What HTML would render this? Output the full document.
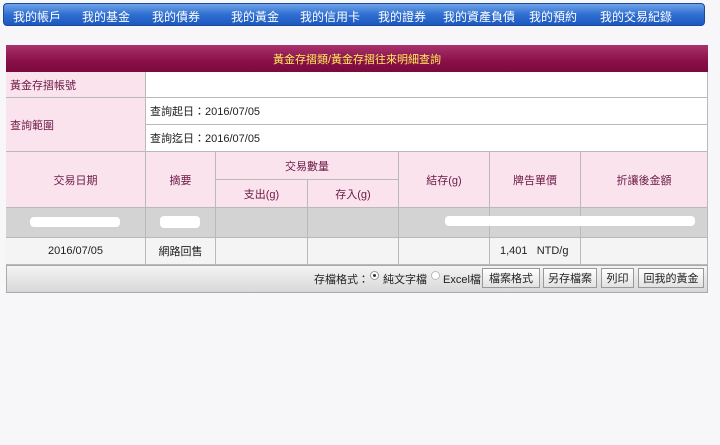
<!DOCTYPE html>
<html><head><meta charset="utf-8"><style>
body{margin:0;width:720px;height:445px;background:#f7f7f9;font-family:"Liberation Sans","Noto Sans CJK TC",sans-serif;font-size:11px;position:relative;overflow:hidden}
.a{position:absolute;box-sizing:border-box}
.nav{left:3px;top:3px;width:702px;height:23px;border-radius:4px;background:linear-gradient(#6fa3e8,#2f6fd2 50%,#1d58bf);border:1px solid #1b4a9a}
.nav span{position:absolute;top:4px;color:#fff;font-size:12px}
.c{border-right:1px solid #b9b9b9;border-bottom:1px solid #b9b9b9;display:flex;align-items:center;justify-content:center;color:#6b1a45}
.p{background:#fbe3ee}
.w{background:#fff}
.g{background:#d3d3d3}
.btn{top:268px;height:20px;border:1px solid #999;background:linear-gradient(#fff,#e2e2e2);font-size:11px;display:flex;align-items:center;justify-content:center;color:#222}
</style></head><body>
<div class="a nav">
<span style="left:9px">我的帳戶</span><span style="left:78px">我的基金</span><span style="left:148px">我的債券</span><span style="left:227px">我的黃金</span><span style="left:296px">我的信用卡</span><span style="left:374px">我的證券</span><span style="left:439px">我的資產負債</span><span style="left:525px">我的預約</span><span style="left:596px">我的交易紀錄</span>
</div>
<div class="a" style="left:6px;top:45px;width:702px;height:248px;border:1px solid #aaa;background:#fff"></div>
<div class="a" style="left:6px;top:45px;width:702px;height:27px;background:linear-gradient(#a8336d,#8a0f48 60%,#7a0a3c);color:#ffef5a;display:flex;align-items:center;justify-content:center;font-size:11px">黃金存摺類/黃金存摺往來明細查詢</div>
<div class="a c p" style="left:6px;top:72px;width:140px;height:26px;justify-content:flex-start;padding-left:4px">黃金存摺帳號</div>
<div class="a c w" style="left:146px;top:72px;width:562px;height:26px"></div>
<div class="a c p" style="left:6px;top:98px;width:140px;height:54px;justify-content:flex-start;padding-left:4px">查詢範圍</div>
<div class="a c w" style="left:146px;top:98px;width:562px;height:27px;justify-content:flex-start;padding-left:4px;color:#222">查詢起日：2016/07/05</div>
<div class="a c w" style="left:146px;top:125px;width:562px;height:27px;justify-content:flex-start;padding-left:4px;color:#222">查詢迄日：2016/07/05</div>
<div class="a c p" style="left:6px;top:152px;width:140px;height:56px">交易日期</div>
<div class="a c p" style="left:146px;top:152px;width:70px;height:56px">摘要</div>
<div class="a c p" style="left:216px;top:152px;width:183px;height:28px">交易數量</div>
<div class="a c p" style="left:216px;top:180px;width:92px;height:28px">支出(g)</div>
<div class="a c p" style="left:308px;top:180px;width:91px;height:28px">存入(g)</div>
<div class="a c p" style="left:399px;top:152px;width:91px;height:56px">結存(g)</div>
<div class="a c p" style="left:490px;top:152px;width:91px;height:56px">牌告單價</div>
<div class="a c p" style="left:581px;top:152px;width:127px;height:56px">折讓後金額</div>
<div class="a c g" style="left:6px;top:208px;width:140px;height:30px"></div>
<div class="a c g" style="left:146px;top:208px;width:70px;height:30px"></div>
<div class="a c g" style="left:216px;top:208px;width:92px;height:30px"></div>
<div class="a c g" style="left:308px;top:208px;width:91px;height:30px"></div>
<div class="a c g" style="left:399px;top:208px;width:91px;height:30px"></div>
<div class="a c g" style="left:490px;top:208px;width:91px;height:30px"></div>
<div class="a c g" style="left:581px;top:208px;width:127px;height:30px"></div>
<div class="a" style="left:30px;top:217px;width:90px;height:10px;background:#fff;border-radius:4px"></div>
<div class="a" style="left:160px;top:216px;width:40px;height:12px;background:#fff;border-radius:4px"></div>
<div class="a" style="left:445px;top:216px;width:250px;height:10px;background:#fff;border-radius:4px"></div>
<div class="a c" style="left:6px;top:238px;width:140px;height:27px;background:#f4f4f4;color:#222">2016/07/05</div>
<div class="a c" style="left:146px;top:238px;width:70px;height:27px;background:#f4f4f4;color:#222">網路回售</div>
<div class="a c" style="left:216px;top:238px;width:92px;height:27px;background:#f4f4f4"></div>
<div class="a c" style="left:308px;top:238px;width:91px;height:27px;background:#f4f4f4"></div>
<div class="a c" style="left:399px;top:238px;width:91px;height:27px;background:#f4f4f4"></div>
<div class="a c" style="left:490px;top:238px;width:91px;height:27px;background:#f4f4f4;color:#222;justify-content:flex-start;padding-left:10px">1,401&nbsp;&nbsp;&nbsp;NTD/g</div>
<div class="a c" style="left:581px;top:238px;width:127px;height:27px;background:#f4f4f4"></div>
<div class="a" style="left:6px;top:265px;width:702px;height:28px;background:linear-gradient(#f4f4f4,#d8d8d8);border:1px solid #aaa"></div>
<div class="a" style="left:314px;top:271px;color:#222">存檔格式：</div>
<div class="a" style="left:370px;top:271px;width:9px;height:9px;border-radius:50%;border:1px solid #999;background:#fff"></div>
<div class="a" style="left:373px;top:274px;width:3px;height:3px;border-radius:50%;background:#333"></div>
<div class="a" style="left:383px;top:271px;color:#222">純文字檔</div>
<div class="a" style="left:431px;top:271px;width:9px;height:9px;border-radius:50%;border:1px solid #bbb;background:#fff"></div>
<div class="a" style="left:443px;top:271px;color:#222">Excel檔</div>
<div class="a btn" style="left:482px;width:58px">檔案格式</div>
<div class="a btn" style="left:543px;width:54px">另存檔案</div>
<div class="a btn" style="left:601px;width:33px">列印</div>
<div class="a btn" style="left:638px;width:66px">回我的黃金</div>
</body></html>
